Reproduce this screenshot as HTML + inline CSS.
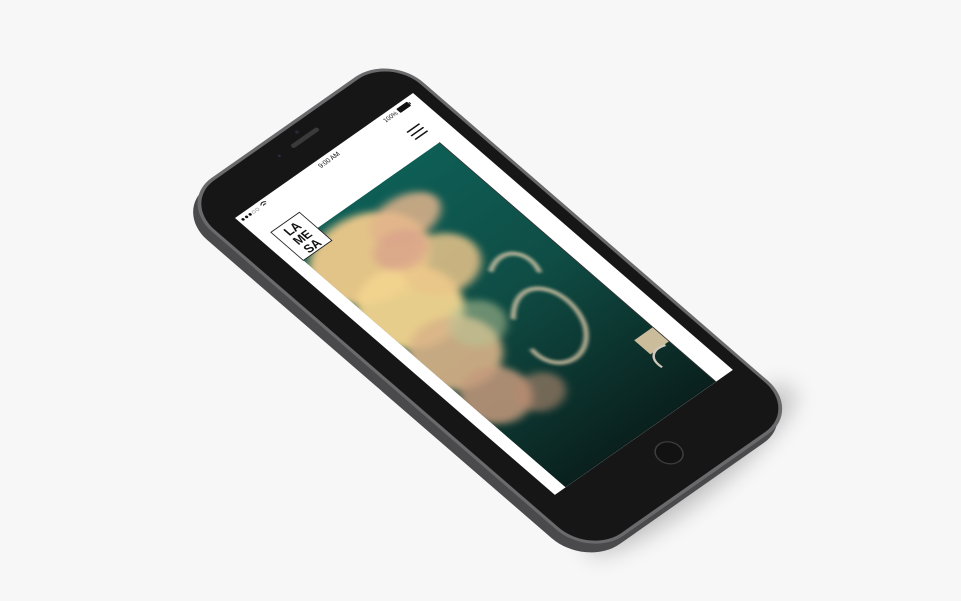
<!DOCTYPE html>
<html><head><meta charset="utf-8"><style>
html,body{margin:0;padding:0;background:#f7f7f7;width:961px;height:601px;overflow:hidden}
svg{display:block}
</style></head><body>
<svg width="961" height="601" viewBox="0 0 961 601" xmlns="http://www.w3.org/2000/svg">
<defs>
<filter id="sh" x="-50%" y="-50%" width="200%" height="200%"><feGaussianBlur stdDeviation="12"/></filter>
<filter id="b2" x="-50%" y="-50%" width="200%" height="200%"><feGaussianBlur stdDeviation="1.5"/></filter>
<filter id="b4" x="-50%" y="-50%" width="200%" height="200%"><feGaussianBlur stdDeviation="3.5"/></filter>
<linearGradient id="tealg" x1="0" y1="0" x2="0" y2="1">
<stop offset="0" stop-color="#0e5e56"/><stop offset="0.45" stop-color="#0f4d45"/><stop offset="1" stop-color="#0a201d"/>
</linearGradient>
<clipPath id="imgclip"><rect x="12" y="48" width="169" height="307"/></clipPath>
</defs>
<ellipse cx="690" cy="470" rx="130" ry="28" fill="#000" opacity="0.25" filter="url(#sh)" transform="rotate(-38 690 470)"/>
<g transform="matrix(0.89,-0.625,0.901,0.78,235,218)">
  <g transform="translate(-9,4)">
    <rect x="-24" y="-40" width="238" height="458" rx="38" fill="#4a4a4c"/>
  </g>
  <rect x="-24" y="-40" width="238" height="458" rx="38" fill="#6a6a6c"/>
  <rect x="-21" y="-37" width="232" height="452" rx="35" fill="#161616"/>
  <rect x="86" y="-24" width="30" height="4" rx="2" fill="#3a3a3a"/>
  <circle cx="100" cy="-30" r="1.5" fill="#2a2a3a"/>
  <circle cx="72" cy="-22" r="1.3" fill="#2a2a3a"/>
  <circle cx="101" cy="382" r="11" fill="#121212" stroke="#3e3e3e" stroke-width="1.2"/>
  <rect x="0" y="0" width="200" height="355" fill="#ffffff"/>
  <g clip-path="url(#imgclip)">
    <rect x="12" y="48" width="169" height="307" fill="url(#tealg)"/>
    <g filter="url(#b4)">
      <ellipse cx="55" cy="95" rx="55" ry="40" fill="#eec98a" opacity="0.95"/>
      <ellipse cx="105" cy="85" rx="35" ry="20" fill="#e2b48c" opacity="0.85"/>
      <ellipse cx="45" cy="150" rx="45" ry="40" fill="#f2d48e" opacity="0.95"/>
      <ellipse cx="95" cy="135" rx="35" ry="28" fill="#e9c48a" opacity="0.85"/>
      <ellipse cx="80" cy="105" rx="25" ry="18" fill="#d8a08c" opacity="0.7"/>
      <ellipse cx="40" cy="205" rx="40" ry="35" fill="#d9b488" opacity="0.9"/>
      <ellipse cx="75" cy="195" rx="25" ry="22" fill="#b8c496" opacity="0.55"/>
      <ellipse cx="35" cy="255" rx="30" ry="28" fill="#c49a7c" opacity="0.85"/>
      <ellipse cx="65" cy="275" rx="22" ry="18" fill="#b88a70" opacity="0.6"/>
    </g>
    <g filter="url(#b2)" fill="none" stroke="#efd6b4" stroke-width="4" opacity="0.75">
      <path d="M100 210 C135 175 160 215 140 250 C120 280 85 270 90 240"/>
      <path d="M120 165 C145 150 160 170 150 190"/>
    </g>
    <rect x="160" y="285" width="21" height="18" fill="#cbbd9c"/>
    <path d="M158 318 C156 306 164 300 176 304" fill="none" stroke="#cfc7bb" stroke-width="2"/>
  </g>
  <line x1="181" y1="48" x2="181" y2="355" stroke="#333" stroke-width="0.8"/>
  <rect x="12" y="28" width="32" height="36" fill="#fff" stroke="#222" stroke-width="0.8"/>
  <text x="28" y="40" font-family="Liberation Sans, sans-serif" font-size="11" font-weight="bold" text-anchor="middle" fill="#111">LA</text>
  <text x="28" y="51" font-family="Liberation Sans, sans-serif" font-size="11" font-weight="bold" text-anchor="middle" fill="#111">ME</text>
  <text x="28" y="62" font-family="Liberation Sans, sans-serif" font-size="11" font-weight="bold" text-anchor="middle" fill="#111">SA</text>
  <g fill="#111"><circle cx="4" cy="5" r="1.3"/><circle cx="8" cy="5" r="1.3"/><circle cx="12" cy="5" r="1.3"/></g>
  <g fill="none" stroke="#999" stroke-width="0.5"><circle cx="16" cy="5" r="1.3"/><circle cx="20" cy="5" r="1.3"/></g>
  <path d="M25 4 Q28 1 31 4 M26.5 5.5 Q28 4 29.5 5.5" fill="none" stroke="#111" stroke-width="0.8"/>
  <text x="100" y="7.5" font-family="Liberation Sans, sans-serif" font-size="6" text-anchor="middle" fill="#111">9:00 AM</text>
  <text x="176" y="7.5" font-family="Liberation Sans, sans-serif" font-size="5.5" text-anchor="end" fill="#111">100%</text>
  <rect x="178" y="3" width="12" height="5" rx="0.8" fill="#111"/>
  <rect x="190.3" y="4.5" width="1" height="2" fill="#111"/>
  <g stroke="#111" stroke-width="1.3"><line x1="168" y1="25" x2="182" y2="25"/><line x1="168" y1="29.5" x2="182" y2="29.5"/><line x1="168" y1="34" x2="182" y2="34"/></g>
</g>
</svg>
</body></html>
